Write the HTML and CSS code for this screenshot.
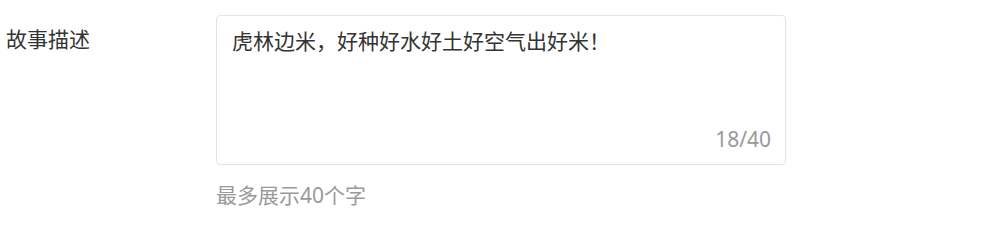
FILE: index.html
```html
<!DOCTYPE html>
<html lang="zh">
<head>
<meta charset="utf-8">
<link rel="stylesheet" href="styles.css">
</head>
<body>
<div class="form-row">
  <div class="label">故事描述</div>
  <div class="control">
    <div class="textarea">
      <div class="value">虎林边米，好种好水好土好空气出好米！</div>
      <div class="count">18/40</div>
    </div>
    <div class="hint">最多展示40个字</div>
  </div>
</div>
</body>
</html>
```
FILE: styles.css
```css
html, body {
  margin: 0;
  padding: 0;
  background: #fff;
}
body {
  font-family: "Noto Sans", "Noto Sans CJK SC", sans-serif;
  font-size: 21px;
  color: #333;
}
.form-row {
  display: flex;
  padding: 15px 0 0 6px;
}
.label {
  width: 210px;
  flex: none;
  line-height: 30px;
  padding-top: 9px;
}
.control {
  display: flex;
  flex-direction: column;
}
.textarea {
  box-sizing: border-box;
  width: 570px;
  height: 150px;
  border: 1px solid #e4e4e4;
  border-radius: 4px;
  padding: 10px 14px 10px 15px;
  display: flex;
  flex-direction: column;
  justify-content: space-between;
}
.value {
  line-height: 30px;
}
.count {
  align-self: flex-end;
  line-height: 30px;
  color: #999;
}
.hint {
  margin-top: 15px;
  line-height: 30px;
  color: #999;
}
```
